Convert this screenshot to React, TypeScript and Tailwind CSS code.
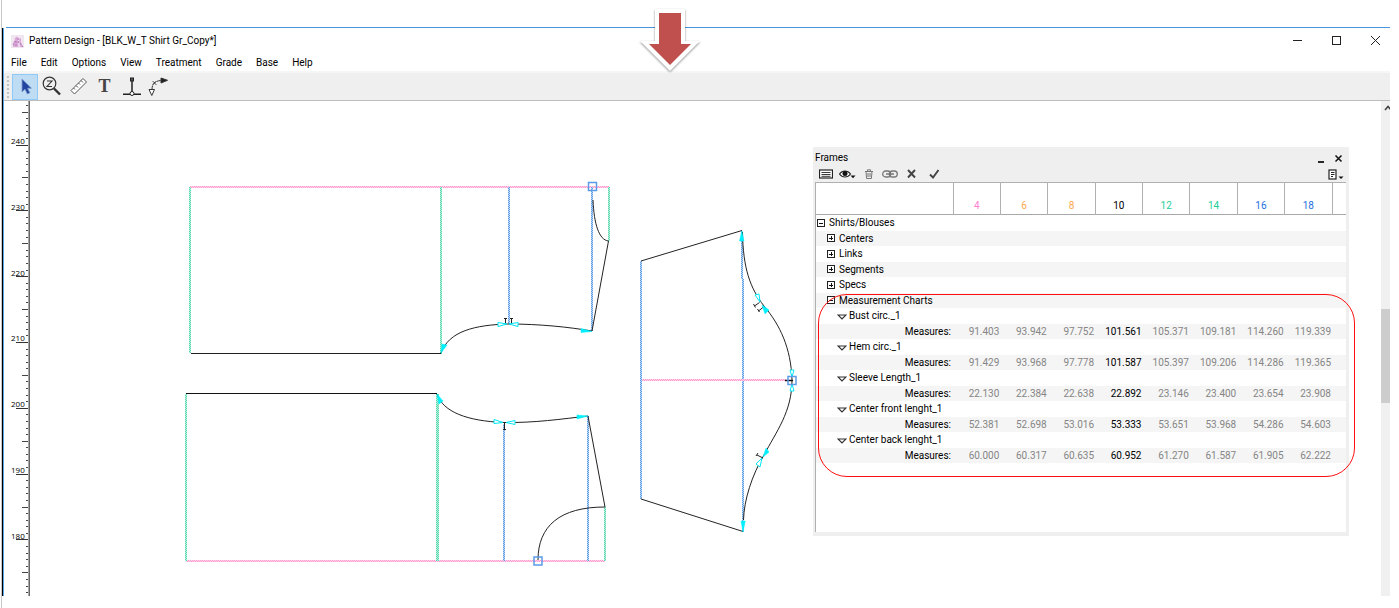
import React from "react";

type Entry =
  | { kind: "root" | "closed" | "open" | "chart"; label: string }
  | { kind: "values"; values: string[] };

const sizes = [
  { name: "4", tone: "text-[#ff7fd0]" },
  { name: "6", tone: "text-[#ffa94d]" },
  { name: "8", tone: "text-[#ffa94d]" },
  { name: "10", tone: "text-black" },
  { name: "12", tone: "text-[#1fcf9a]" },
  { name: "14", tone: "text-[#1fcf9a]" },
  { name: "16", tone: "text-[#1f6fe0]" },
  { name: "18", tone: "text-[#1f6fe0]" },
];

const entries: Entry[] = [
  { kind: "root", label: "Shirts/Blouses" },
  { kind: "closed", label: "Centers" },
  { kind: "closed", label: "Links" },
  { kind: "closed", label: "Segments" },
  { kind: "closed", label: "Specs" },
  { kind: "open", label: "Measurement Charts" },
  { kind: "chart", label: "Bust circ._1" },
  { kind: "values", values: ["91.403", "93.942", "97.752", "101.561", "105.371", "109.181", "114.260", "119.339"] },
  { kind: "chart", label: "Hem circ._1" },
  { kind: "values", values: ["91.429", "93.968", "97.778", "101.587", "105.397", "109.206", "114.286", "119.365"] },
  { kind: "chart", label: "Sleeve Length_1" },
  { kind: "values", values: ["22.130", "22.384", "22.638", "22.892", "23.146", "23.400", "23.654", "23.908"] },
  { kind: "chart", label: "Center front lenght_1" },
  { kind: "values", values: ["52.381", "52.698", "53.016", "53.333", "53.651", "53.968", "54.286", "54.603"] },
  { kind: "chart", label: "Center back lenght_1" },
  { kind: "values", values: ["60.000", "60.317", "60.635", "60.952", "61.270", "61.587", "61.905", "62.222"] },
];

const menus = ["File", "Edit", "Options", "View", "Treatment", "Grade", "Base", "Help"];

function AppIcon() {
  return (
    <svg width="13" height="13" viewBox="0 0 13 13" aria-hidden="true">
      <rect width="13" height="13" fill="#efe6ef" />
      <path d="M2 12c0-3 .5-5 1.500-6l.5-3 2-1.500L7.500 3 7 6l.5 6z" fill="#dcaad9" />
      <path d="M8 4l2-1v4l2 5H9z" fill="#dcaad9" />
      <path d="M2 10l2-4M5 11V5M7 3l.5 5M9 8l3 4" stroke="#a966ae" strokeWidth=".8" fill="none" strokeDasharray="2 1" />
    </svg>
  );
}

const tools = [
  {
    name: "Select",
    art: <path d="M9 5v13l3-2.800 2.300 4.800 2.600-1.200-2.300-4.600H18.500z" fill="#2347a0" stroke="#7d9bd0" strokeWidth=".8" />,
  },
  {
    name: "Zoom",
    art: (
      <g fill="none" stroke="#333">
        <circle cx="10.500" cy="9.500" r="6.300" strokeWidth="1.200" />
        <path d="M8 7h5l-5 5.500h5" strokeWidth="1.100" />
        <path d="M15 14.500l6 6" strokeWidth="2.400" />
      </g>
    ),
  },
  {
    name: "Measure",
    art: (
      <g fill="#fff" stroke="#555" strokeWidth="1">
        <path d="M5 16.500L17 4.500l3.500 3.500-12 12z" />
        <path d="M7.500 14l1.500 1.500M10 11.500l2 2M12.500 9l1.500 1.500M15 6.500l2 2" />
      </g>
    ),
  },
  {
    name: "Text",
    art: (
      <text x="12.500" y="18" textAnchor="middle" className="fill-[#444] font-['Liberation_Serif',serif] text-[18px] font-bold">
        T
      </text>
    ),
  },
  {
    name: "Perpendicular",
    art: (
      <g stroke="#222" fill="none">
        <path d="M13 5v14M4 20.200h18" strokeWidth="1.500" />
        <rect x="11.500" y="4" width="3" height="3" fill="#555" />
        <circle cx="13" cy="19.500" r="2" fill="#fff" />
      </g>
    ),
  },
  {
    name: "Curve",
    art: (
      <g stroke="#333" fill="none">
        <path d="M7 15.500C7 9 11 6.500 17 6.500" strokeDasharray="4 1" />
        <path d="M16 4l6.500 2.300L16 9z" fill="#222" />
        <path d="M4 15.500h5.500L6.800 21.500z" fill="#fff" />
        <path d="M7.500 7l4 4M11.500 7l-4 4" strokeWidth=".8" />
      </g>
    ),
  },
];

const majors = [240, 230, 220, 210, 200, 190, 180];
const ticks = Array.from({ length: 75 }, (_, i) => i - 6);

function Ruler() {
  return (
    <svg className="shrink-0" width="27" height="495" viewBox="4 101 27 495" shapeRendering="crispEdges">
      {ticks.map((t) => {
        const y = Math.round(144.5 + t * 6.583);
        const major = t % 10 === 0;
        const mid = t % 5 === 0;
        return (
          <rect key={t} x={major ? 16 : mid ? 22 : 26} y={y} width={major ? 13 : mid ? 7 : 3} height="1" fill={major ? "#333" : "#444"} />
        );
      })}
      <rect x="28" y="101" width="1" height="495" fill="#a8a8a8" />
      <rect x="29" y="101" width="1" height="495" fill="#666" />
      {majors.map((m, i) => (
        <text key={m} x="11" y={Math.round(144 + i * 65.83)} className="fill-black font-['Open_Sans',sans-serif] text-[8px]">
          {m}
        </text>
      ))}
    </svg>
  );
}

function Guide({ x, y, w, h, tone }: { x: number; y: number; w: number; h: number; tone: "pink" | "green" | "blue" }) {
  const base = { pink: "#ffd2e9", green: "#b9f0dd", blue: "#bbd8f6" }[tone];
  return (
    <g>
      <rect x={x} y={y} width={w} height={h} fill={base} />
      <rect x={x} y={y} width={w} height={h} fill={`url(#dots-${tone})`} />
    </g>
  );
}

function Dots({ id, color }: { id: string; color: string }) {
  return (
    <pattern id={id} width="2" height="2" patternUnits="userSpaceOnUse">
      <rect width="1" height="1" fill={color} />
      <rect x="1" y="1" width="1" height="1" fill={color} />
    </pattern>
  );
}

function Pattern() {
  return (
    <svg className="shrink-0" width="770" height="495" viewBox="31 101 770 495" role="img" aria-label="T-shirt pattern pieces">
      <defs>
        <Dots id="dots-pink" color="#ff9ace" />
        <Dots id="dots-green" color="#58d9ad" />
        <Dots id="dots-blue" color="#5f9be3" />
      </defs>
      <g shapeRendering="crispEdges">
        <Guide tone="pink" x={190} y={186} w={419} h={2} />
        <Guide tone="green" x={189} y={187} w={2} h={166} />
        <Guide tone="green" x={440} y={187} w={2} h={167} />
        <Guide tone="blue" x={508} y={187} w={2} h={137} />
        <Guide tone="blue" x={591} y={187} w={2} h={144} />
        <Guide tone="green" x={608} y={187} w={2} h={54} />
        <rect x="191" y="353" width="250" height="1" fill="#222" />

        <Guide tone="pink" x={186} y={560} w={419} h={2} />
        <Guide tone="green" x={185} y={394} w={2} h={167} />
        <Guide tone="green" x={436} y={394} w={3} h={167} />
        <Guide tone="blue" x={503} y={424} w={2} h={137} />
        <Guide tone="blue" x={587} y={416} w={2} h={145} />
        <Guide tone="green" x={604} y={507} w={2} h={54} />
        <rect x="186" y="393" width="251" height="1" fill="#111" />

        <Guide tone="blue" x={640} y={261} w={2} h={238} />
        <Guide tone="blue" x={741} y={231} w={2} h={48} />
        <Guide tone="blue" x={742} y={279} w={2} h={253} />
        <Guide tone="pink" x={642} y={379} w={144} h={2} />
      </g>

      <g fill="none" stroke="#222" strokeWidth="1">
        <path d="M593 200C594 224 599 240 608.500 241L592 331" />
        <path d="M441 353C449 331 475 325 508 324C540 324 568 327 592 331" />
        <path d="M437 394C443 412 467 421 504 422.500C534 423 562 419 588 416L605 507C560 507 538 526 538 560" />
        <path d="M641 261L742 230.500M641 499L743 531.500" />
        <path d="M742.500 232C743 268 750 288 764 306C780 325 791 348 792 380C792 412 776 432 764 455C752 475 744 500 743.500 520" />
        <path d="M505.500 318v7M504 318.500h3M511.500 318v7M510 318.500h3" />
        <path d="M504.500 423v6M503 429.500h3" />
        <path d="M754.500 306l5-3.500M753.500 304l2 3.500M758.500 311l5-4M757.500 309l2 3" />
        <path d="M757 455l6 3M758 453l-2 3" />
      </g>
      <path d="M785 380.500h8" stroke="#111" strokeWidth="1.500" />

      <g fill="#00f0ff" stroke="#00f0ff" strokeWidth=".5">
        <path d="M441 353l1-9 5 1z" />
        <path d="M592 331.500l-11-3v4z" />
        <path d="M437 394l6 7-4 3z" />
        <path d="M588 416l-11-1v4z" />
        <path d="M741.800 231l-2.300 10h4.500z" />
        <path d="M743 532l-2-11h4.300z" />
        <path d="M762 305l7 5-4 4z" />
        <path d="M763 457l6-5-3-4z" />
      </g>
      <g fill="#fff" stroke="#00e5f5" strokeWidth="1">
        <path d="M507 324l-9-1.500v4zM509 324l9-1.500v4z" />
        <path d="M503 422.500l-9-3v4zM506 422.500l9-2v4z" />
        <path d="M760 302l-5-7 4-1zM762 458l-6 6 4 3z" />
        <path d="M792 377l-2-7h4zM792 384l-2 7h4z" />
      </g>
      <g fill="none" stroke="#5c9be6" strokeWidth="1.500">
        <rect x="588.500" y="182.500" width="8" height="8" />
        <rect x="534" y="557" width="8" height="8" />
        <rect x="788" y="376.500" width="8" height="8" />
      </g>
    </svg>
  );
}

function Expander({ open }: { open: boolean }) {
  return (
    <svg width="9" height="9" viewBox="0 0 9 9" aria-hidden="true" shapeRendering="crispEdges">
      <rect x="1.500" y=".5" width="7" height="7" fill="#fff" stroke="#222" />
      <path d={open ? "M3 4.500h4" : "M3 4.500h4M5.500 2v4"} stroke="#111" />
    </svg>
  );
}

function Label({ entry }: { entry: Entry }) {
  if (entry.kind === "values") {
    return <span className="block pr-0.5 text-right">Measures:</span>;
  }
  const indent = { root: "pl-0", closed: "pl-2.5", open: "pl-2.5", chart: "pl-5" }[entry.kind];
  return (
    <button type="button" className={`flex items-center gap-1 whitespace-nowrap ${indent}`}>
      {entry.kind === "chart" ? (
        <svg className="-mr-0.5 ml-px mt-0.5" width="10" height="6" viewBox="0 0 10 6" aria-hidden="true">
          <path d="M1 1h8L5 5z" fill="#fff" stroke="#333" strokeWidth="1.200" />
        </svg>
      ) : (
        <Expander open={entry.kind !== "closed"} />
      )}
      {entry.label}
    </button>
  );
}

function FramesPanel() {
  return (
    <section aria-label="Frames" className="absolute right-[41px] top-[46px] w-[536px] bg-[#efefef] pb-1 pl-0.5 pr-[3px]">
      <header className="flex h-[21px] items-center justify-between pr-[3px] pt-px">
        <h2>Frames</h2>
        <div className="flex gap-2">
          <button type="button" aria-label="Minimize frames">
            <svg width="9" height="9" viewBox="0 0 9 9"><path d="M1 8h6" stroke="#111" strokeWidth="1.800" /></svg>
          </button>
          <button type="button" aria-label="Close frames">
            <svg width="9" height="9" viewBox="0 0 9 9"><path d="M1.500 1.500l6 6M7.500 1.500l-6 6" stroke="#111" strokeWidth="1.500" /></svg>
          </button>
        </div>
      </header>
      <div className="flex h-[14px] items-center justify-between pb-0.5 pl-1 pr-0.5">
        <div className="flex items-center gap-2">
          <button type="button" aria-label="List">
            <svg width="14" height="10" viewBox="0 0 14 10"><rect x=".5" y="1" width="13" height="8" fill="#fff" stroke="#222" strokeWidth="1.200" /><path d="M2.500 3.500h9M2.500 5.500h9M2.500 7.300h9" stroke="#222" strokeWidth=".9" /></svg>
          </button>
          <button type="button" aria-label="Visibility" className="-ml-0.5">
            <svg width="17" height="10" viewBox="0 0 17 10"><path d="M.5 5c3-4 8-4 11 0-3 4-8 4-11 0z" fill="#fff" stroke="#222" strokeWidth="1.200" /><circle cx="6" cy="4.500" r="2.500" fill="#111" /><path d="M11.500 6.500h5L14 9.200z" fill="#111" /></svg>
          </button>
          <button type="button" aria-label="Delete">
            <svg width="10" height="10" viewBox="0 0 10 10"><path d="M1 2.500h8M3.500 2V.8h3V2M2 2.500l.6 7h4.800l.6-7M4 4v4M6 4v4" fill="none" stroke="#777" /></svg>
          </button>
          <button type="button" aria-label="Link">
            <svg width="16" height="10" viewBox="0 0 16 10" fill="none" stroke="#777"><rect x=".7" y="2" width="8" height="6" rx="3" strokeWidth="1.300" /><rect x="7.300" y="2" width="8" height="6" rx="3" strokeWidth="1.300" /><path d="M4 5h8" strokeWidth="1.500" /></svg>
          </button>
          <button type="button" aria-label="Cancel">
            <svg width="11" height="10" viewBox="0 0 11 10"><path d="M2 1l7 7.500M9 1L2 8.500" stroke="#444" strokeWidth="1.900" /></svg>
          </button>
          <button type="button" aria-label="Apply" className="ml-1">
            <svg width="11" height="10" viewBox="0 0 11 10"><path d="M1 5.500L4 8.500 9.500 1" fill="none" stroke="#444" strokeWidth="1.900" /></svg>
          </button>
        </div>
        <button type="button" aria-label="Report options">
          <svg width="16" height="11" viewBox="0 0 16 11"><rect x="1" y="1" width="7" height="9" fill="#fff" stroke="#222" strokeWidth="1.200" /><path d="M3 3.500h3.500M3 5.500h3.500M3 7.500h2" stroke="#222" /><path d="M10.500 7.500h5L13 10z" fill="#111" /></svg>
        </button>
      </div>
      <div className="min-h-[350px] border-l border-t border-[#b0b0b0] bg-white">
        <table className="w-full table-fixed border-collapse">
          <colgroup>
            <col className="w-[137px]" />
            {sizes.map((s) => (
              <col key={s.name} />
            ))}
            <col className="w-[14px]" />
          </colgroup>
          <thead>
            <tr className="h-[31px] border-b border-[#a8a8a8]">
              <th aria-label="Frame" className="border-r border-[#b0b0b0]" />
              {sizes.map((s) => (
                <th key={s.name} scope="col" className={`border-r border-[#b0b0b0] p-0 pt-[15px] text-center font-normal ${s.tone}`}>
                  {s.name}
                </th>
              ))}
              <th aria-hidden="true" />
            </tr>
          </thead>
          <tbody>
            <tr className="h-px" aria-hidden="true"><td colSpan={10} className="p-0" /></tr>
            {entries.map((e, i) => (
              <tr key={i} className="even:h-4 odd:h-[15px] odd:bg-[#f5f5f5]">
                <td className="p-0"><Label entry={e} /></td>
                {e.kind === "values"
                  ? e.values.map((v, c) => (
                      <td key={c} className={`p-0 pr-px text-right ${c === 3 ? "text-black" : "text-[#858585]"}`}>{v}</td>
                    ))
                  : <td colSpan={8} className="p-0" />}
                <td className="p-0" />
              </tr>
            ))}
          </tbody>
        </table>
      </div>
    </section>
  );
}

export default function App() {
  return (
    <div className="relative min-h-screen bg-white pl-px font-['Roboto','Noto_Sans',sans-serif] text-[10px] leading-[14px] text-black">
      <div className="min-h-screen border-l border-[#c8c8c8] pr-[9px] pt-[27px]">
        <div className="ml-1 h-px bg-[#4a94de]" />
        <main className="border-l border-black">
          <div className="border-l border-[#5aa5ea]">
            <header className="flex h-[26px] items-center justify-between pl-[7px] pr-[9px]">
              <h1 className="flex items-center gap-[5px]">
                <AppIcon />
                Pattern Design - [BLK_W_T Shirt Gr_Copy*]
              </h1>
              <div className="flex items-center gap-7 pb-0.5">
                <button type="button" aria-label="Minimize"><svg width="11" height="11" viewBox="0 0 11 11"><path d="M1 5.500h9" stroke="#222" /></svg></button>
                <button type="button" aria-label="Maximize"><svg width="11" height="11" viewBox="0 0 11 11"><rect x="1.500" y="1.500" width="8" height="8" fill="none" stroke="#222" /></svg></button>
                <button type="button" aria-label="Close"><svg width="11" height="11" viewBox="0 0 11 11"><path d="M1 1l9 9M10 1l-9 9" stroke="#222" /></svg></button>
              </div>
            </header>
            <nav aria-label="Main" className="flex h-[17px] items-center gap-[14px] pl-[7px]">
              {menus.map((m) => (
                <button key={m} type="button">{m}</button>
              ))}
            </nav>
            <div role="toolbar" aria-label="Tools" className="flex h-[30px] items-center border-b border-t-2 border-b-[#bdbdbd] border-t-[#f6f6f6] bg-[#efefef] pl-[3px]">
              <div className="mr-[3px] h-[22px] border-l-2 border-dotted border-[#c4c4c4]" />
              {tools.map((t, i) => (
                <button
                  key={t.name}
                  type="button"
                  aria-label={t.name}
                  className={`flex h-[26px] w-[27px] items-center justify-center border even:w-[26px] ${i === 0 ? "border-[#90c8f6] bg-[#bedcf4]" : "border-transparent"}`}
                >
                  <svg className="shrink-0" width="25" height="25" viewBox="0 0 25 25">{t.art}</svg>
                </button>
              ))}
            </div>
            <div className="relative flex justify-between">
              <div className="flex min-w-0">
                <Ruler />
                <Pattern />
              </div>
              <div className="flex w-[9px] flex-col overflow-hidden bg-[#f0f0f0]">
                <svg className="ml-[3px] mt-1" width="8" height="6" viewBox="0 0 8 6"><path d="M1 5l3-3.500L7 5" fill="none" stroke="#444" strokeWidth="1.600" /></svg>
                <div className="mt-[198px] h-[94px] bg-[#cdcdcd]" />
              </div>
              <FramesPanel />
              <div className="pointer-events-none absolute right-[35px] top-[193px] h-[183px] w-[537px] rounded-[29px] border border-[#ff1010]" />
            </div>
          </div>
        </main>
      </div>
      <svg className="absolute left-[635px] top-1 overflow-visible" width="70" height="76" viewBox="635 4 70 76" aria-hidden="true">
        <path
          d="M655 9h30v32h15L670 71 640 41h15z"
          fill="#fff"
          className="drop-shadow-[0_1px_1px_rgba(0,0,0,0.45)]"
        />
        <path d="M659 13h22v31h10L670 65 649 44h10z" fill="#c0504d" />
      </svg>
    </div>
  );
}
